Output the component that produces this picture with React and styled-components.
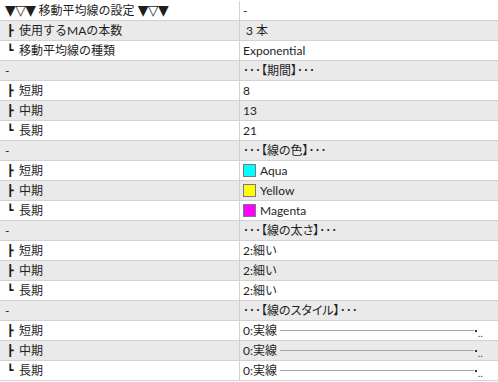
import React from 'react';
import styled, { createGlobalStyle } from 'styled-components';

const GlobalStyle = createGlobalStyle`
  html, body {
    margin: 0;
    padding: 0;
    background: #ffffff;
  }
  body {
    font-family: Lato, "DejaVu Sans", "Noto Sans CJK JP", sans-serif;
    font-size: 12px;
    color: #1e1e1e;
  }
`;

const lineColor = '#d2d2d2';

const Table = styled.div`
  width: 498px;
  height: 382px;
  padding-top: 1px;
  box-sizing: border-box;
  background: #ffffff;
  overflow: hidden;
`;

const Row = styled.div`
  display: grid;
  grid-template-columns: 240px 1fr;
  height: 20px;
  box-sizing: border-box;
  border-bottom: 1px solid ${lineColor};
  background: ${(p) => (p.$shaded ? '#eaeaea' : '#ffffff')};
`;

const NameCell = styled.div`
  display: flex;
  align-items: center;
  padding-left: 5px;
  border-right: 1px solid ${lineColor};
  white-space: nowrap;
  overflow: hidden;
  line-height: 19px;
`;

const ValueCell = styled.div`
  display: flex;
  align-items: center;
  padding-left: 3px;
  white-space: nowrap;
  overflow: hidden;
  line-height: 19px;
`;

const TitleCell = styled(ValueCell)`
  font-feature-settings: "palt";
`;

const Branch = styled.span`
  display: inline-block;
  width: 12px;
  padding-left: 2px;
  font-family: "DejaVu Sans", sans-serif;
  font-size: 11px;
  font-weight: bold;
  line-height: 19px;
  color: #1e1e1e;
`;

const Arrows = styled.span`
  font-family: "DejaVu Sans", sans-serif;
  font-size: 14px;
  letter-spacing: -0.6px;
`;

const Swatch = styled.span`
  display: inline-block;
  width: 11px;
  height: 11px;
  margin-right: 4px;
  border: 1px solid #7a7a7a;
  background: ${(p) => p.$color};
`;

const StyleLine = styled.span`
  display: inline-block;
  width: 194px;
  height: 1px;
  margin-left: 3px;
  background: #a8a8a8;
`;

const StyleDot = styled.span`
  display: inline-block;
  width: 2px;
  height: 2px;
  margin-left: 1px;
  background: #303030;
`;

const StyleTail = styled.span`
  font-size: 9px;
  margin-left: 1px;
  padding-top: 5px;
  letter-spacing: 0.5px;
`;

const Count = styled.span`
  padding-left: 3px;
`;

const colors = { Aqua: '#00ffff', Yellow: '#ffff00', Magenta: '#ff00ff' };

const periods = ['短期', '中期', '長期'];

function Tree({ last, children }) {
  return (
    <NameCell>
      <Branch>{last ? '┗' : '┣'}</Branch>
      {children}
    </NameCell>
  );
}

function LineStyle() {
  return (
    <ValueCell>
      0:実線
      <StyleLine />
      <StyleDot />
      <StyleTail>..</StyleTail>
    </ValueCell>
  );
}

export default function App() {
  const rows = [];

  rows.push(
    <Row key="h">
      <NameCell>
        <Arrows>▼▽▼</Arrows>&nbsp;移動平均線の設定&nbsp;<Arrows>▼▽▼</Arrows>
      </NameCell>
      <ValueCell>-</ValueCell>
    </Row>
  );
  rows.push(
    <Row key="ma" $shaded>
      <Tree>使用するMAの本数</Tree>
      <ValueCell><Count>3 本</Count></ValueCell>
    </Row>
  );
  rows.push(
    <Row key="type">
      <Tree last>移動平均線の種類</Tree>
      <ValueCell>Exponential</ValueCell>
    </Row>
  );

  const sections = [
    { title: '･･･【期間】･･･', values: ['8', '13', '21'] },
    { title: '･･･【線の色】･･･', values: ['Aqua', 'Yellow', 'Magenta'], color: true },
    { title: '･･･【線の太さ】･･･', values: ['2:細い', '2:細い', '2:細い'] },
    { title: '･･･【線のスタイル】･･･', values: null },
  ];

  sections.forEach((s, si) => {
    rows.push(
      <Row key={'s' + si} $shaded>
        <NameCell>-</NameCell>
        <TitleCell>{s.title}</TitleCell>
      </Row>
    );
    periods.forEach((p, i) => {
      rows.push(
        <Row key={'s' + si + p} $shaded={i === 1}>
          <Tree last={i === 2}>{p}</Tree>
          {s.values === null ? (
            <LineStyle />
          ) : (
            <ValueCell>
              {s.color && <Swatch $color={colors[s.values[i]]} />}
              {s.values[i]}
            </ValueCell>
          )}
        </Row>
      );
    });
  });

  return (
    <>
      <GlobalStyle />
      <Table>{rows}</Table>
    </>
  );
}
